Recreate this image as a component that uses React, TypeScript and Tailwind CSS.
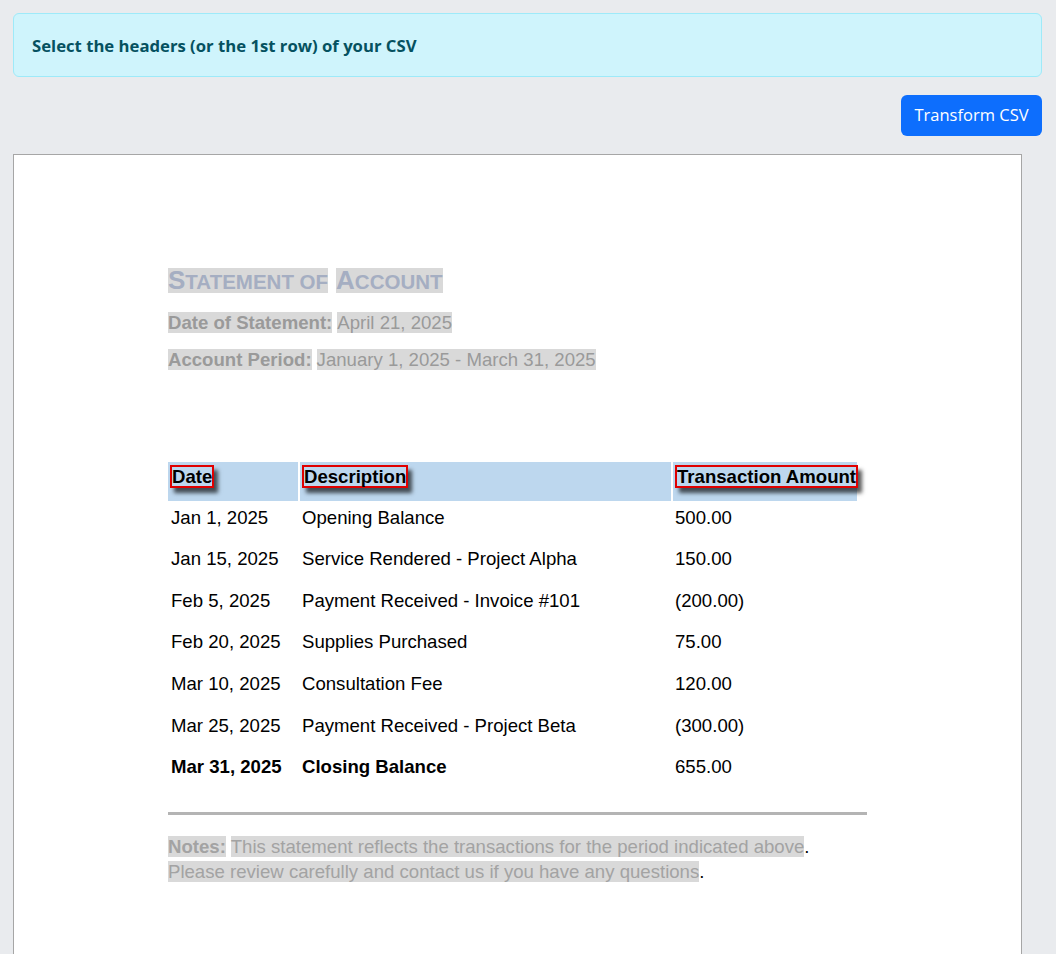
import React from 'react';

const rows = [
  { date: 'Jan 1, 2025', desc: 'Opening Balance', amount: '500.00' },
  { date: 'Jan 15, 2025', desc: 'Service Rendered - Project Alpha', amount: '150.00' },
  { date: 'Feb 5, 2025', desc: 'Payment Received - Invoice #101', amount: '(200.00)' },
  { date: 'Feb 20, 2025', desc: 'Supplies Purchased', amount: '75.00' },
  { date: 'Mar 10, 2025', desc: 'Consultation Fee', amount: '120.00' },
  { date: 'Mar 25, 2025', desc: 'Payment Received - Project Beta', amount: '(300.00)' },
  { date: 'Mar 31, 2025', desc: 'Closing Balance', amount: '655.00', bold: true },
];

const HeaderCell: React.FC<{ label: string; width: string }> = ({ label, width }) => (
  <div className={`${width} h-full bg-[#bdd7ee] pl-[2px] pt-[3px]`}>
    <span className="inline-block whitespace-nowrap border-2 border-[#e00000] font-bold text-[18.6px] leading-[19px] text-black shadow-[4px_5px_4px_rgba(0,0,0,0.65)]">
      {label}
    </span>
  </div>
);

export default function App() {
  return (
    <div className="min-h-screen bg-[#e9ebee] pt-[13px] pl-[13px] pr-[14px] font-['Open_Sans',sans-serif]">
      <div className="flex h-[64px] items-center rounded-md border border-[#9eeaf9] bg-[#cff4fc] px-[18px] pt-[1px]">
        <h5 className="text-[16.7px] font-bold text-[#055160]">Select the headers (or the 1st row) of your CSV</h5>
      </div>

      <div className="mt-[18px] flex justify-end">
        <button className="h-[41px] w-[141px] rounded-md bg-[#0d6efd] text-[16.5px] text-white">Transform CSV</button>
      </div>

      <div className="mt-[18px] mr-[20px] h-[820px] border border-[#a6a6a6] bg-white pl-[154px] pt-[113px] font-['Liberation_Sans',Arial,sans-serif]">
        {/* title */}
        <div className="flex h-[25px] items-start gap-[8px] font-bold text-[#a5aec2]">
          <span className="flex h-[25px] items-baseline bg-[#d9d9d9] leading-[25px]">
            <span className="text-[26px]">S</span>
            <span className="text-[20.5px]">TATEMENT OF</span>
          </span>
          <span className="flex h-[25px] items-baseline bg-[#d9d9d9] leading-[25px]">
            <span className="text-[26px]">A</span>
            <span className="text-[20.5px]">CCOUNT</span>
          </span>
        </div>

        <div className="mt-[19px] flex h-[20px] items-center gap-[5px] text-[18.6px] leading-[21px] text-[#9a9a9a]">
          <span className="bg-[#d9d9d9] font-bold">Date of Statement:</span>
          <span className="bg-[#d9d9d9]">April 21, 2025</span>
        </div>
        <div className="mt-[17px] flex h-[20px] items-center gap-[5px] text-[18.6px] leading-[21px] text-[#9a9a9a]">
          <span className="bg-[#d9d9d9] font-bold">Account Period:</span>
          <span className="bg-[#d9d9d9]">January 1, 2025 - March 31, 2025</span>
        </div>

        {/* table */}
        <div className="mt-[93px] w-[689px]">
          <div className="flex h-[39px] gap-[2px]">
            <HeaderCell label="Date" width="w-[130px]" />
            <HeaderCell label="Description" width="w-[371px]" />
            <HeaderCell label="Transaction Amount" width="w-[184px]" />
          </div>
          {rows.map(r => (
            <div
              key={r.date}
              className={`flex h-[41.67px] gap-[2px] pt-[5.5px] text-[18.6px] leading-[21px] text-black ${r.bold ? 'font-bold' : ''}`}
            >
              <div className="w-[130px] pl-[3px]">{r.date}</div>
              <div className="w-[371px] pl-[2px]">{r.desc}</div>
              <div className="w-[184px] pl-[2px] font-normal">{r.amount}</div>
            </div>
          ))}
        </div>

        <div className="mt-[19px] h-[3px] w-[699px] bg-[#b4b4b4]" />

        <div className="mt-[19px] text-[18.6px] leading-[25px] text-[#a3a3a3]">
          <div>
            <span className="bg-[#d9d9d9] font-bold">Notes:</span>{' '}
            <span className="bg-[#d9d9d9]">This statement reflects the transactions for the period indicated above</span>
            <span className="text-black">.</span>
          </div>
          <div>
            <span className="bg-[#d9d9d9]">Please review carefully and contact us if you have any questions</span>
            <span className="text-black">.</span>
          </div>
        </div>
      </div>
    </div>
  );
}
